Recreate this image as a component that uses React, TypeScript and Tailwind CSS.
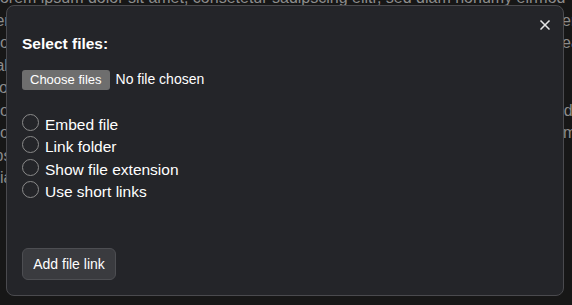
import { X } from "lucide-react";

const lorem =
  "Lorem ipsum dolor sit amet, consetetur sadipscing elitr, sed diam nonumy eirmod tempor invidunt ut labore et dolore magna aliquyam erat, sed diam voluptua. At vero eos et accusam et justo duo dolores et ea rebum. Stet clita kasd gubergren, no sea takimata sanctus est Lorem ipsum dolor sit amet. Lorem ipsum dolor sit amet, consetetur sadipscing elitr, sed diam nonumy eirmod tempor invidunt ut labore et dolore magna aliquyam erat, sed diam voluptua. At vero eos et accusam et justo duo dolores et ea rebum. Stet clita kasd gubergren, no sea takimata sanctus est Lorem ipsum dolor sit amet. Lorem ipsum dolor sit amet, consetetur sadipscing elitr, sed diam nonumy eirmod tempor invidunt ut labore et dolore magna aliquyam erat.";

const options = ["Embed file", "Link folder", "Show file extension", "Use short links"];

export default function App() {
  return (
    <main className="relative h-[305px] w-[572px] overflow-hidden bg-[#171717] font-['Liberation_Sans',Arial,sans-serif]">
      <p className="-ml-[9px] -mt-[13px] w-[600px] text-base leading-[22.5px] text-[#8c8c8c]">{lorem}</p>

      <div className="absolute left-[6px] top-[5px] flex h-[291px] w-[558px] flex-col rounded-lg border border-[#4a4a4e] bg-[#242529] px-[15px] pt-[28px] pb-[15px] text-white">
        <button className="absolute right-[10px] top-[11px] text-[#e5e5e5]">
          <X size={16} strokeWidth={2.5} />
        </button>

        <h2 className="text-[15.5px] font-bold leading-[20px]">Select files:</h2>

        <div className="mt-[15px] flex items-center gap-[6px]">
          <span className="flex h-[20px] items-center rounded-[3px] bg-[#6e6e6e] px-[8px] text-[13px]">Choose files</span>
          <span className="text-[14px]">No file chosen</span>
        </div>

        <ul className="mt-[23px] flex flex-col">
          {options.map((o) => (
            <li key={o} className="flex h-[22.5px] items-center gap-[6px] text-[15.5px]">
              <span className="h-[17px] w-[17px] -translate-y-[2px] rounded-full border border-[#8a8a8a]" />
              <span>{o}</span>
            </li>
          ))}
        </ul>

        <button className="mt-auto flex h-[32px] w-[94px] items-center justify-center rounded-md border border-[#4d4e52] bg-[#3a3b3f] text-[14px] text-white">
          Add file link
        </button>
      </div>
    </main>
  );
}
